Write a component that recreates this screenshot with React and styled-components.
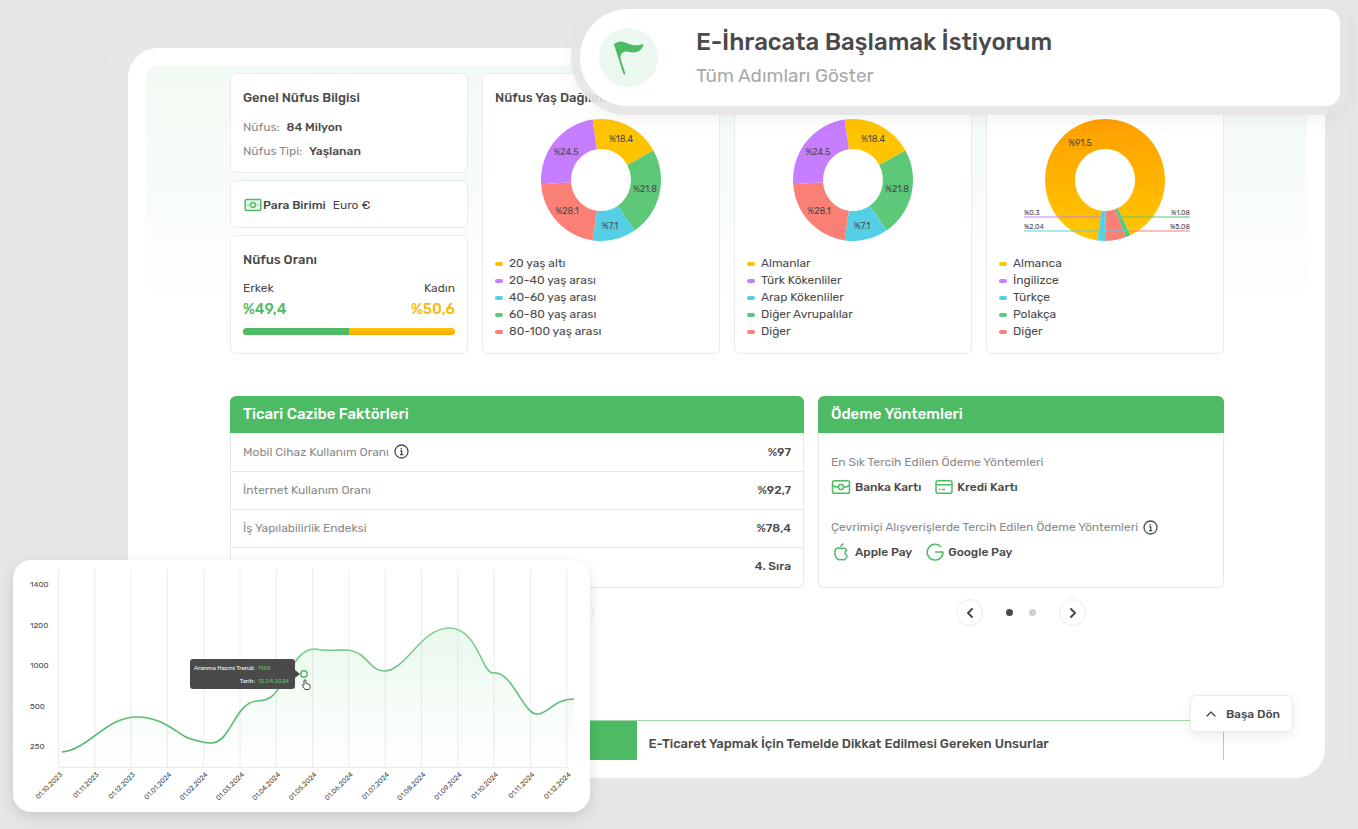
import React from 'react'
import styled, { createGlobalStyle } from 'styled-components'
import { ChevronLeft, ChevronRight, ChevronUp } from 'lucide-react'

const GlobalStyle = createGlobalStyle`
* {
  box-sizing: border-box;
}
body {
  margin: 0;
  background: #e6e6e6;
  color: #4a4a4a;
  font-family: Rubik, Roboto, "Open Sans", sans-serif;
  font-size: 12px;
  line-height: 16px;
}
button {
  font: inherit;
  color: inherit;
  cursor: pointer;
}
h2, h3, p, ul, dl, dd {
  margin: 0;
  padding: 0;
}
`
const Page = styled.div`
position: relative;
min-height: 100vh;
padding: 48px 33px 51px 128px;
overflow: hidden;
`
const Panel = styled.main`
background: #fff;
border-radius: 30px;
padding: 18px;
box-shadow: 0 0 0 24px rgba(255, 255, 255, 0.06);
`
const Scroll = styled.div`
padding: 7px 83px 0 84px;
border-radius: 10px;
background: linear-gradient(#f1faf3, #fff 254px);
`
const StatsGrid = styled.section`
display: grid;
grid-template-columns: repeat(4, 1fr);
gap: 14px;
`
const Stack = styled.div`
display: flex;
flex-direction: column;
gap: 7px;
`
const Card = styled.article`
background: #fff;
border: 1px solid #e9ecea;
border-radius: 6px;
padding: 15px 12px 13px;
`
const Title = styled.h3`
font-size: 13px;
line-height: 18px;
font-weight: 500;
`
const Fact = styled.p`
margin-top: ${props => props.$first ? "12px" : "8px"};
color: #8a8a8a;
strong {
  font-weight: 500;
  color: #4a4a4a;
  margin-left: 4px;
}
`
const Currency = styled.p`
display: flex;
align-items: center;
height: 18px;
font-weight: 500;
span {
  font-weight: 400;
  margin-left: 7px;
}
`
const Ratio = styled.dl`
display: flex;
justify-content: space-between;
margin-top: 11px;
div:last-child {
  text-align: right;
}
`
const Share = styled.dd`
font-size: 15px;
line-height: 22px;
margin-top: 2px;
font-weight: 500;
color: ${props => props.color};
`
const Bar = styled.div`
display: flex;
height: 7px;
margin: 8px 0 5px;
border-radius: 4px;
overflow: hidden;
background: linear-gradient(#ffc400, #f7a800);
`
const Fill = styled.div`
background: #4dbb63;
`
const Donut = styled.svg`
display: block;
width: 100%;
height: 124px;
margin: 11px 0 13px;
overflow: visible;
text {
  font-size: 9px;
  fill: #4a4a4a;
}
`
const Legend = styled.ul`
list-style: none;
`
const LegendItem = styled.li`
display: flex;
align-items: center;
gap: 6px;
line-height: 17px;
&::before {
  content: "";
  width: 8px;
  height: 4px;
  border-radius: 2px;
  background: ${props => props.color};
}
`
const DetailGrid = styled.section`
display: grid;
grid-template-columns: 574fr 406fr;
column-gap: 14px;
row-gap: 11px;
margin-top: 42px;
`
const Block = styled.article`
display: flex;
flex-direction: column;
`
const BlockTitle = styled.h2`
padding: 8px 13px 9px;
border-radius: 6px 6px 0 0;
background: #4dbb63;
color: #fff;
font-size: 15px;
line-height: 20px;
font-weight: 500;
`
const BlockBody = styled.div`
flex: 1;
border: 1px solid #e6e8e6;
border-top: none;
border-radius: 0 0 6px 6px;
`
const Table = styled.table`
width: 100%;
border-collapse: collapse;
th, td {
  height: 38px;
  padding: 0 12px;
}
th {
  text-align: left;
  font-weight: 400;
  color: #8a8a8a;
}
td {
  text-align: right;
  font-weight: 500;
}
tr + tr {
  border-top: 1px solid #e6e8e6;
}
`
const WithIcon = styled.span`
display: flex;
align-items: center;
gap: 5px;
color: #8a8a8a;
`
const Payments = styled.div`
padding: 21px 12px 26px;
`
const Methods = styled.div`
display: flex;
align-items: center;
gap: 14px;
margin: ${props => props.$last ? "8px 0 0" : "8px 0 23px"};
`
const Method = styled.span`
display: flex;
align-items: center;
gap: 4px;
height: 18px;
font-weight: 500;
`
const Pager = styled.nav`
display: flex;
align-items: center;
justify-content: center;
gap: 16px;
`
const Arrow = styled.button`
display: flex;
align-items: center;
justify-content: center;
width: 27px;
height: 27px;
padding: 0;
background: #fff;
border: 1px solid #ececec;
border-radius: 50%;
margin: 0 7px;
`
const Dot = styled.button`
width: 7px;
height: 7px;
padding: 0;
border: none;
border-radius: 50%;
background: ${props => props.$active ? "#4a4a4a" : "#d0d0d0"};
`
const Tabs = styled.section`
display: grid;
grid-template-columns: 407fr 587fr;
height: 40px;
margin-top: 94px;
border-top: 1px solid #9fd9aa;
border-right: 1px solid #9fd9aa;
`
const TabMark = styled.div`
background: #4dbb63;
`
const TabTitle = styled.h2`
padding: 14px 12px 0;
font-size: 13px;
line-height: 18px;
font-weight: 500;
`
const Banner = styled.a`
position: absolute;
top: 9px;
right: 18px;
left: 580px;
display: flex;
align-items: center;
gap: 38px;
height: 97px;
padding: 0 19px;
background: #fff;
border-radius: 48px 14px 14px 48px;
box-shadow: 0 0 0 9px rgba(229, 229, 229, 0.9), 0 6px 20px 6px rgba(0, 0, 0, 0.06);
color: #4a4a4a;
text-decoration: none;
`
const BannerTitle = styled.h2`
font-size: 24px;
line-height: 32px;
font-weight: 500;
`
const BannerText = styled.p`
margin-top: 4px;
font-size: 19px;
line-height: 28px;
color: #a9a9a9;
`
const FlagCircle = styled.svg`
width: 59px;
height: 59px;
`
const TopButton = styled.button`
position: absolute;
right: 65px;
top: 695px;
display: flex;
align-items: center;
gap: 7px;
height: 37px;
padding: 0 12px;
background: #fff;
border: 1px solid #ebebeb;
border-radius: 6px;
box-shadow: 0 4px 12px rgba(0, 0, 0, 0.08);
font-weight: 500;
`
const TrendCard = styled.section`
position: absolute;
left: 13px;
top: 560px;
width: 577px;
background: #fff;
border-radius: 18px;
box-shadow: 0 5px 14px rgba(0, 0, 0, 0.12);
`
const Trend = styled.svg`
display: block;
width: 100%;
height: 252px;
`
const AxisText = styled.text`
font-size: ${props => props.$size}px;
fill: ${props => props.$color || "#4a4a4a"};
`

const colors = {
  yellow: "#ffc300",
  purple: "#c77dff",
  blue: "#54cfe6",
  green: "#5cc878",
  red: "#fa7f74",
}

const groups = [
  { value: "%18.4", color: "yellow", from: -8, to: 61, x: 20, y: -41 },
  { value: "%21.8", color: "green", from: 61, to: 146, x: 44, y: 9 },
  { value: "%7.1", color: "blue", from: 146, to: 188, x: 9, y: 46 },
  { value: "%28.1", color: "red", from: 188, to: 266, x: -34, y: 31 },
  { value: "%24.5", color: "purple", from: 266, to: 352, x: -35, y: -28 },
]

const languages = [
  { value: "%91.5", color: "orange", from: 187, to: 515, x: -25, y: -37 },
  { color: "green", from: 155, to: 160 },
  { color: "red", from: 160, to: 179 },
  { color: "blue", from: 179, to: 187 },
]

const callouts = [
  { value: "%0.3", color: "purple", y: 37, from: -81, to: -4, side: -81 },
  { value: "%2.04", color: "blue", y: 51, from: -81, to: 24, side: -81 },
  { value: "%1.08", color: "green", y: 37, from: 16, to: 85, side: 85 },
  { value: "%5.08", color: "red", y: 51, from: 24, to: 85, side: 85 },
]

const order = ["yellow", "purple", "blue", "green", "red"]

const point = (rx, ry, deg) => {
  const a = deg * Math.PI / 180
  return `${(rx * Math.sin(a)).toFixed(2)} ${(-ry * Math.cos(a)).toFixed(2)}`
}

const slice = (from, to) => {
  const large = to - from > 180 ? 1 : 0
  return `M${point(60, 61, from)} A60 61 0 ${large} 1 ${point(60, 61, to)} L${point(30, 31, to)} A30 31 0 ${large} 0 ${point(30, 31, from)} Z`
}

const DonutChart = ({ slices, lines = [] }) => (
  <Donut viewBox="-106 -62 212 124">
    <defs>
      <linearGradient id="orange" x1="0" y1="0" x2="0" y2="1">
        <stop offset="0" stopColor="#ff9f00" />
        <stop offset="1" stopColor="#ffc800" />
      </linearGradient>
    </defs>
    {slices.map((s) => (
      <path key={s.from} d={slice(s.from, s.to)} fill={colors[s.color] || "url(#orange)"} />
    ))}
    {slices.map((s) => s.value && (
      <text key={s.value} x={s.x} y={s.y + 3} textAnchor="middle">{s.value}</text>
    ))}
    {lines.map((l) => (
      <g key={l.value}>
        <line x1={l.from} x2={l.to} y1={l.y} y2={l.y} stroke={colors[l.color]} strokeWidth="1.2" />
        <text x={l.side} y={l.y - 2} textAnchor={l.side < 0 ? "start" : "end"} style={{ fontSize: 7 }}>{l.value}</text>
      </g>
    ))}
  </Donut>
)

const ChartCard = ({ title, slices, lines, labels }) => (
  <Card>
    <Title>{title}</Title>
    <DonutChart slices={slices} lines={lines} />
    <Legend>
      {labels.map((label, i) => (
        <LegendItem key={label} color={colors[order[i]]}>{label}</LegendItem>
      ))}
    </Legend>
  </Card>
)

const CashIcon = () => (
  <svg width="20" height="16" viewBox="0 0 20 16" fill="none" stroke="#4dbb63" strokeWidth="1.5">
    <rect x="2.2" y="2.5" width="15.600" height="11" rx="1.2" fill="#eaf7ed" />
    <circle cx="10" cy="8" r="2.400" fill="#fff" />
    <path d="M4.500 8h1.300M14.200 8h1.300" />
  </svg>
)

const BankIcon = () => (
  <svg width="20" height="16" viewBox="0 0 20 16" fill="none" stroke="#4dbb63" strokeWidth="1.500">
    <rect x="1.500" y="1.700" width="17" height="12.600" rx="1.800" />
    <circle cx="10" cy="8" r="2.600" />
    <path d="M2 6.500l2.500 1.500h2.900M12.600 8h2.900L18 6.500" />
  </svg>
)

const CardIcon = () => (
  <svg width="18" height="16" viewBox="0 0 18 16" fill="none" stroke="#4dbb63" strokeWidth="1.500">
    <rect x="1" y="1.700" width="16" height="12.600" rx="2" />
    <path d="M1 5.800h16M4 10.500h1.600M7 10.500h3" />
  </svg>
)

const AppleIcon = () => (
  <svg width="20" height="18" viewBox="0 0 20 18" fill="none" stroke="#4dbb63" strokeWidth="1.500" strokeLinecap="round" strokeLinejoin="round">
    <path d="M10 5.600C7.500 4.100 3.800 5 3.800 9.400c0 3.300 2 7.400 4.500 7.400.8 0 1.200-.4 1.900-.4s1.200.4 2 .4c1.700 0 3.400-1.900 3.900-3.900-2.600-.9-2.900-4.400-.4-5.900C14.500 4.900 12 4.600 10 5.600z" />
    <path d="M10 3.600C10 2 10.700 1.200 12 .9" />
  </svg>
)

const GoogleIcon = () => (
  <svg width="18" height="18" viewBox="0 0 18 18" fill="none" stroke="#4dbb63" strokeWidth="1.500" strokeLinecap="round" strokeLinejoin="round">
    <path d="M14.600 3.500A7.900 7.900 0 1 0 17 9H9.500" />
  </svg>
)

const InfoIcon = () => (
  <svg width="15" height="15" viewBox="0 0 15 15" fill="none" stroke="#4a4a4a" strokeWidth="1.300">
    <circle cx="7.500" cy="7.500" r="6.500" />
    <path d="M6.200 6.800h1.500v3.600M6 10.600h3.300M7.300 3.900v1.500" />
  </svg>
)

const factors = [
  { name: "Mobil Cihaz Kullanım Oranı", value: "%97", info: true },
  { name: "İnternet Kullanım Oranı", value: "%92,7" },
  { name: "İş Yapılabilirlik Endeksi", value: "%78,4" },
  { name: "Lojistik Performans Endeksi", value: "4. Sıra" },
]

const dates = ["01.10.2023", "01.11.2023", "01.12.2023", "01.01.2024", "01.02.2024", "01.03.2024", "01.04.2024", "01.05.2024", "01.06.2024", "01.07.2024", "01.08.2024", "01.09.2024", "01.10.2024", "01.11.2024", "01.12.2024"]
const volumes = [1400, 1200, 1000, 500, 250]
const curve = "M49 192C77 189 92 157 124 157C150 157 163 173 175 178C184 181 190 183 198 183C218 183 221 144 243 141C249 140 251 142 258 137C273 126 281 88 302 89C312 91 324 90 334 90C355 92 356 111 371 111C393 111 408 68 436 68C465 68 468 112 480 113C499 110 510 154 524 154C536 154 540 139 561 139"

const TrendChart = () => (
  <Trend viewBox="0 0 577 252">
    <defs>
      <linearGradient id="area" x1="0" y1="0" x2="0" y2="1">
        <stop offset="0" stopColor="#4dcc68" stopOpacity="0.12" />
        <stop offset="1" stopColor="#4dcc68" stopOpacity="0" />
      </linearGradient>
      <linearGradient id="line" x1="0" y1="0" x2="0" y2="1">
        <stop offset="0" stopColor="#86cf96" />
        <stop offset="1" stopColor="#4db367" />
      </linearGradient>
    </defs>
    {dates.map((d, i) => (
      <g key={d}>
        <line x1={45.5 + i * 36.3} x2={45.5 + i * 36.3} y1="9" y2="207" stroke="#ececec" />
        <AxisText $size={7} transform={`translate(${50 + i * 36.3} 215) rotate(-45)`} textAnchor="end">{d}</AxisText>
      </g>
    ))}
    <line x1="45" x2="554" y1="207.500" y2="207.500" stroke="#ececec" />
    {volumes.map((v, i) => (
      <AxisText $size={8} key={v} x="17" y={27 + i * 40.6}>{v}</AxisText>
    ))}
    <path d={`${curve}V207H49Z`} fill="url(#area)" />
    <path d={curve} fill="none" stroke="url(#line)" strokeWidth="1.600" />
    <rect x="177" y="99" width="105" height="30" rx="3" fill="#4a4a4a" />
    <path d="M282 110l5 4-5 4z" fill="#4a4a4a" />
    <AxisText $size={6} $color="#fff" x="242" y="110" textAnchor="end">Aranma Hacmi Trendi:</AxisText>
    <AxisText $size={6} $color="#5cc878" x="245" y="110">1160</AxisText>
    <AxisText $size={6} $color="#fff" x="242" y="123" textAnchor="end">Tarih:</AxisText>
    <AxisText $size={6} $color="#5cc878" x="245" y="123">13.04.2024</AxisText>
    <circle cx="291" cy="114" r="3.200" fill="#fff" stroke="#4dbb63" strokeWidth="1.500" />
    <path d="M291 125v-4q0-1.300 1-1.300t1 1.300v2.500l3 .7q1 .3 1 1.500v1.500q0 1.600-1 2.300h-4l-3-4q.3-1 2-.5z" fill="#fff" stroke="#333" strokeWidth=".9" />
  </Trend>
)

const Switcher = ({ count }) => (
  <Pager aria-label="Sayfalar">
    <Arrow aria-label="Önceki"><ChevronLeft size={16} strokeWidth={3} /></Arrow>
    {Array.from({ length: count }, (_, i) => (
      <Dot key={i} $active={i === 0} aria-label={`Sayfa ${i + 1}`} />
    ))}
    <Arrow aria-label="Sonraki"><ChevronRight size={16} strokeWidth={3} /></Arrow>
  </Pager>
)

const App = () => {
  const male = 49.9
  return (
    <Page>
      <GlobalStyle />
      <Panel>
        <Scroll>
          <StatsGrid>
            <Stack>
              <Card>
                <Title>Genel Nüfus Bilgisi</Title>
                <Fact $first>Nüfus: <strong>84 Milyon</strong></Fact>
                <Fact>Nüfus Tipi: <strong>Yaşlanan</strong></Fact>
              </Card>
              <Card>
                <Currency><CashIcon /> Para Birimi <span>Euro €</span></Currency>
              </Card>
              <Card>
                <Title>Nüfus Oranı</Title>
                <Ratio>
                  <div>
                    <dt>Erkek</dt>
                    <Share color="#4dbb63">%49,4</Share>
                  </div>
                  <div>
                    <dt>Kadın</dt>
                    <Share color="#f9b90f">%50,6</Share>
                  </div>
                </Ratio>
                <Bar><Fill style={{ width: `${male}%` }} /></Bar>
              </Card>
            </Stack>
            <ChartCard title="Nüfus Yaş Dağılımı" slices={groups} labels={["20 yaş altı", "20-40 yaş arası", "40-60 yaş arası", "60-80 yaş arası", "80-100 yaş arası"]} />
            <ChartCard title="Etnik Dağılım" slices={groups} labels={["Almanlar", "Türk Kökenliler", "Arap Kökenliler", "Diğer Avrupalılar", "Diğer"]} />
            <ChartCard title="Konuşulan Diller" slices={languages} lines={callouts} labels={["Almanca", "İngilizce", "Türkçe", "Polakça", "Diğer"]} />
          </StatsGrid>
          <DetailGrid>
            <Block>
              <BlockTitle>Ticari Cazibe Faktörleri</BlockTitle>
              <BlockBody>
                <Table>
                  <tbody>
                    {factors.map((f) => (
                      <tr key={f.name}>
                        <th scope="row"><WithIcon>{f.name}{f.info && <InfoIcon />}</WithIcon></th>
                        <td>{f.value}</td>
                      </tr>
                    ))}
                  </tbody>
                </Table>
              </BlockBody>
            </Block>
            <Block>
              <BlockTitle>Ödeme Yöntemleri</BlockTitle>
              <BlockBody>
                <Payments>
                  <WithIcon>En Sık Tercih Edilen Ödeme Yöntemleri</WithIcon>
                  <Methods>
                    <Method><BankIcon />Banka Kartı</Method>
                    <Method><CardIcon />Kredi Kartı</Method>
                  </Methods>
                  <WithIcon>Çevrimiçi Alışverişlerde Tercih Edilen Ödeme Yöntemleri <InfoIcon /></WithIcon>
                  <Methods $last>
                    <Method><AppleIcon />Apple Pay</Method>
                    <Method><GoogleIcon />Google Pay</Method>
                  </Methods>
                </Payments>
              </BlockBody>
            </Block>
            <Switcher count={3} />
            <Switcher count={2} />
          </DetailGrid>
          <Tabs>
            <TabMark />
            <TabTitle>E-Ticaret Yapmak İçin Temelde Dikkat Edilmesi Gereken Unsurlar</TabTitle>
          </Tabs>
        </Scroll>
      </Panel>
      <Banner href="#adimlar">
        <FlagCircle viewBox="0 0 59 59">
          <circle cx="29.500" cy="29.500" r="29.500" fill="#ecf8ef" />
          <path d="M16 16.500L25.300 45.500" stroke="#4dbb63" strokeWidth="2" strokeLinecap="round" />
          <path d="M15.500 16C20 11.800 25 13.500 29 15.500c5 2.500 9 2 15.300.5-.3 5-4.500 8.700-10 8.500-4.500-.2-7.500-2-10.500 0-1.800 1.300-2.300 3-2.500 7.500z" fill="#4dbb63" />
        </FlagCircle>
        <div>
          <BannerTitle>E-İhracata Başlamak İstiyorum</BannerTitle>
          <BannerText>Tüm Adımları Göster</BannerText>
        </div>
      </Banner>
      <TopButton><ChevronUp size={16} />Başa Dön</TopButton>
      <TrendCard aria-label="Aranma Hacmi Trendi">
        <TrendChart />
      </TrendCard>
    </Page>
  )
}

export default App
